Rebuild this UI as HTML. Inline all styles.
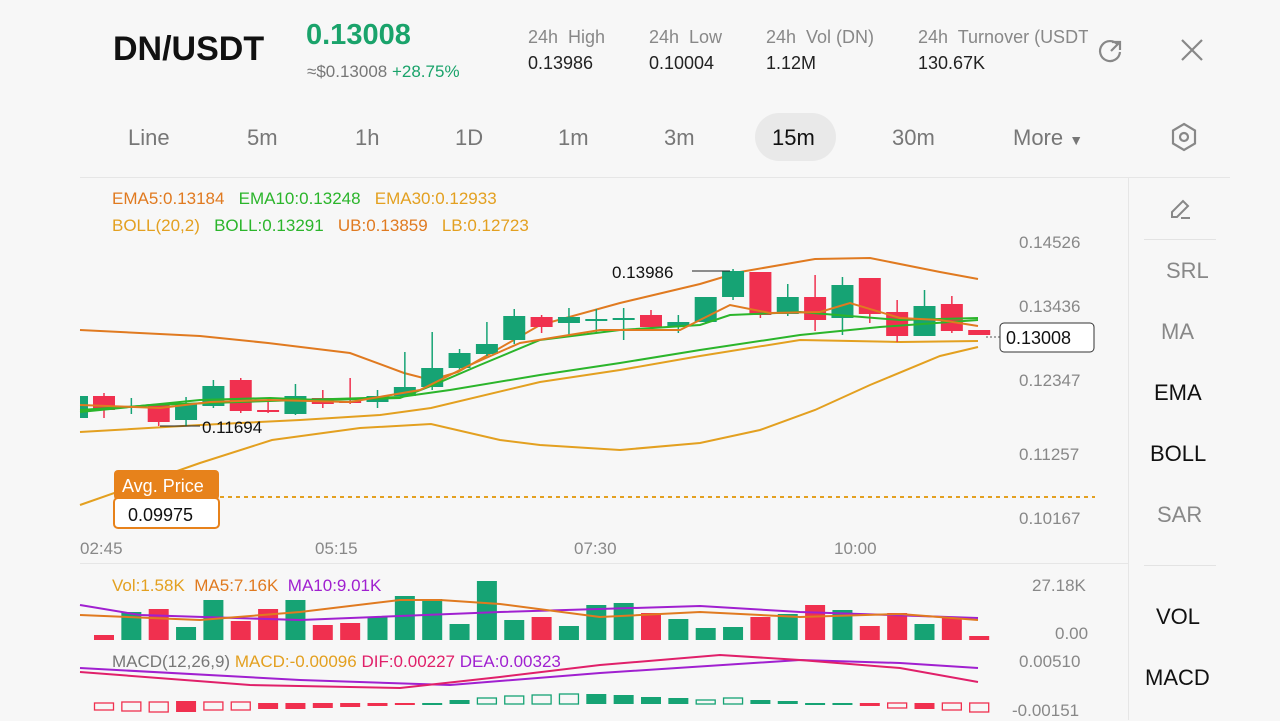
<!DOCTYPE html>
<html><head><meta charset="utf-8"><style>
body{margin:0;width:1280px;height:720px;overflow:hidden;background:#f7f7f7;font-family:"Liberation Sans",sans-serif}
.a{position:absolute;white-space:nowrap}
</style></head><body>
<div class="a" style="left:113px;top:30px;font-size:34px;font-weight:bold;color:#111">DN/USDT</div>
<div class="a" style="left:306px;top:19px;font-size:29px;font-weight:bold;color:#1aa36b">0.13008</div>
<div class="a" style="left:307px;top:62px;font-size:17px;color:#777">≈$0.13008 <span style="color:#1aa36b">+28.75%</span></div>
<div class="a" style="left:528px;top:27px;font-size:18px;color:#888">24h&nbsp; High</div>
<div class="a" style="left:528px;top:53px;font-size:18px;color:#222">0.13986</div>
<div class="a" style="left:649px;top:27px;font-size:18px;color:#888">24h&nbsp; Low</div>
<div class="a" style="left:649px;top:53px;font-size:18px;color:#222">0.10004</div>
<div class="a" style="left:766px;top:27px;font-size:18px;color:#888">24h&nbsp; Vol (DN)</div>
<div class="a" style="left:766px;top:53px;font-size:18px;color:#222">1.12M</div>
<div class="a" style="left:918px;top:27px;font-size:18px;color:#888;width:170px;overflow:hidden">24h&nbsp; Turnover (USDT)</div>
<div class="a" style="left:918px;top:53px;font-size:18px;color:#222">130.67K</div>
<svg class="a" style="left:1096px;top:36px" width="30" height="30" viewBox="0 0 30 30" fill="none" stroke="#888" stroke-width="2.2"><path d="M22 9 A10 10 0 1 0 24 16"/><path d="M16 6 H24 V14"/><path d="M24 6 L15 15"/></svg>
<svg class="a" style="left:1180px;top:38px" width="24" height="24" stroke="#888" stroke-width="2.2"><path d="M2 2L22 22M22 2L2 22"/></svg>
<div class="a" style="left:755px;top:113px;width:81px;height:48px;border-radius:24px;background:#e9e9e9"></div>
<div class="a" style="top:125px;font-size:22px;color:#777;left:0;width:1280px">
<span class="a" style="left:128px">Line</span><span class="a" style="left:247px">5m</span><span class="a" style="left:355px">1h</span><span class="a" style="left:455px">1D</span><span class="a" style="left:558px">1m</span><span class="a" style="left:664px">3m</span><span class="a" style="left:772px;color:#111">15m</span><span class="a" style="left:892px">30m</span><span class="a" style="left:1013px">More <span style="font-size:14px">▼</span></span></div>
<svg class="a" style="left:1170px;top:122px" width="28" height="30" fill="none" stroke="#888" stroke-width="2.2"><path d="M14 2 L25 8.5 V21.5 L14 28 L3 21.5 V8.5 Z"/><circle cx="14" cy="15" r="4"/></svg>
<div class="a" style="left:80px;top:177px;width:1150px;height:1px;background:#e6e6e6"></div>
<div class="a" style="left:1128px;top:178px;width:1px;height:542px;background:#e6e6e6"></div>
<div class="a" style="left:1144px;top:239px;width:72px;height:1px;background:#e3e3e3"></div>
<div class="a" style="left:1144px;top:565px;width:72px;height:1px;background:#e3e3e3"></div>
<div class="a" style="left:80px;top:563px;width:1048px;height:1px;background:#e6e6e6"></div>
<svg class="a" style="left:1168px;top:196px" width="26" height="26" fill="none" stroke="#888" stroke-width="2"><path d="M4 21 L4 16 L15 5 L20 10 L9 21 Z M13 22 H22"/></svg>
<div class="a" style="left:1166px;top:258px;font-size:22px;color:#888">SRL</div>
<div class="a" style="left:1161px;top:319px;font-size:22px;color:#888">MA</div>
<div class="a" style="left:1154px;top:380px;font-size:22px;color:#111">EMA</div>
<div class="a" style="left:1150px;top:441px;font-size:22px;color:#111">BOLL</div>
<div class="a" style="left:1157px;top:502px;font-size:22px;color:#888">SAR</div>
<div class="a" style="left:1156px;top:604px;font-size:22px;color:#111">VOL</div>
<div class="a" style="left:1145px;top:665px;font-size:22px;color:#111">MACD</div>
<div class="a" style="left:112px;top:189px;font-size:17px;color:#e07a20">EMA5:0.13184 &nbsp;&nbsp;<span style="color:#2bb52b">EMA10:0.13248</span> &nbsp;&nbsp;<span style="color:#e3a020">EMA30:0.12933</span></div>
<div class="a" style="left:112px;top:216px;font-size:17px;color:#e3a020">BOLL(20,2) &nbsp;&nbsp;<span style="color:#2bb52b">BOLL:0.13291</span> &nbsp;&nbsp;<span style="color:#e07a20">UB:0.13859</span> &nbsp;&nbsp;LB:0.12723</div>
<div class="a" style="left:1019px;top:233px;font-size:17px;color:#888;line-height:20px">0.14526</div>
<div class="a" style="left:1019px;top:297px;font-size:17px;color:#888">0.13436</div>
<div class="a" style="left:1019px;top:371px;font-size:17px;color:#888">0.12347</div>
<div class="a" style="left:1019px;top:445px;font-size:17px;color:#888">0.11257</div>
<div class="a" style="left:1019px;top:509px;font-size:17px;color:#888">0.10167</div>
<div class="a" style="left:80px;top:539px;font-size:17px;color:#888">02:45</div>
<div class="a" style="left:315px;top:539px;font-size:17px;color:#888">05:15</div>
<div class="a" style="left:574px;top:539px;font-size:17px;color:#888">07:30</div>
<div class="a" style="left:834px;top:539px;font-size:17px;color:#888">10:00</div>
<div class="a" style="left:1032px;top:576px;font-size:17px;color:#888">27.18K</div>
<div class="a" style="left:1055px;top:624px;font-size:17px;color:#888">0.00</div>
<div class="a" style="left:1019px;top:652px;font-size:17px;color:#888">0.00510</div>
<div class="a" style="left:1012px;top:701px;font-size:17px;color:#888">-0.00151</div>
<div class="a" style="left:112px;top:576px;font-size:17px;color:#e3a020">Vol:1.58K &nbsp;<span style="color:#e07a20">MA5:7.16K</span> &nbsp;<span style="color:#a020d0">MA10:9.01K</span></div>
<div class="a" style="left:112px;top:652px;font-size:17px;color:#777">MACD(12,26,9) <span style="color:#e3a020">MACD:-0.00096</span> <span style="color:#e0206a">DIF:0.00227</span> <span style="color:#a020d0">DEA:0.00323</span></div>
<svg class="a" style="left:0;top:0" width="1280" height="720">
<g fill="none" stroke-width="2">
<path stroke="#e07a20" d="M80 330 L200 336 L268 343 L350 353 L404 373 L431 380 L458 372 L540 325 L620 303 L700 284 L740 272 L815 259 L870 258 L940 272 L978 279"/>
<path stroke="#e3a020" d="M80 505 L200 463 L272 440 L360 428 L431 424 L500 440 L540 445 L620 450 L700 443 L760 430 L815 410 L870 385 L940 356 L978 347"/>
<path stroke="#e3a020" d="M80 432 L200 425 L300 420 L380 415 L431 408 L540 382 L620 370 L700 356 L800 340 L900 342 L978 341"/>
</g>
<g id="c"></g>
<g fill="none" stroke-width="2">
<path stroke="#2bb52b" d="M80 412 L150 405 L300 400 L400 397 L450 390 L540 375 L620 363 L700 350 L800 335 L880 327 L978 320"/>
<path stroke="#2bb52b" d="M80 410 L140 406 L200 400 L270 398 L320 400 L400 398 L431 386 L480 365 L540 340 L620 330 L700 325 L730 315 L800 312 L900 320 L978 318"/>
<path stroke="#e07a20" d="M80 405 L160 408 L210 402 L270 400 L350 402 L420 390 L470 365 L520 343 L600 330 L680 330 L730 305 L770 313 L820 312 L850 303 L900 318 L940 320 L978 326"/>
<path stroke="#222" stroke-width="1" d="M692 271 H730 M160 426 H200"/>
<path stroke="#e3a020" stroke-width="2" stroke-dasharray="4 4" d="M220 497 H1095"/>
<path stroke="#555" stroke-width="1" stroke-dasharray="2 2" d="M986 337 H1000"/>
<path stroke="#a020d0" d="M80 605 L140 615 L300 620 L500 612 L700 606 L800 612 L978 618"/>
<path stroke="#e07a20" d="M80 615 L200 620 L300 612 L400 600 L440 600 L500 604 L600 617 L700 612 L800 617 L900 614 L978 620"/>
<path stroke="#a020d0" d="M80 668 L300 680 L450 685 L600 673 L800 660 L900 663 L978 668"/>
<path stroke="#e0206a" d="M80 672 L250 685 L400 688 L500 677 L600 665 L720 655 L800 660 L900 668 L978 682"/>
</g>
<text x="612" y="278" font-size="17" fill="#111" font-family="Liberation Sans">0.13986</text>
<text x="202" y="433" font-size="17" fill="#111" font-family="Liberation Sans">0.11694</text>
<rect x="1000" y="323" width="94" height="29" rx="4" fill="#fff" stroke="#333"/>
<text x="1006" y="344" font-size="18" fill="#111" font-family="Liberation Sans">0.13008</text>
<rect x="114" y="470" width="105" height="30" rx="4" fill="#e7821b"/>
<rect x="114" y="498" width="105" height="30" rx="4" fill="#fff" stroke="#e7821b" stroke-width="2"/>
<text x="122" y="492" font-size="18" fill="#fff" font-family="Liberation Sans">Avg. Price</text>
<text x="128" y="521" font-size="18" fill="#111" font-family="Liberation Sans">0.09975</text>
</svg>
<script>
var G="#16a374",R="#f0304f";
var x0=104,dx=27.35;
var c=[[396,410,393,418,R],[406,406,398,414,G],[405,422,405,426,R],[403,420,397,426,G],[386,406,380,408,G],[380,411,378,413,R],[410,411,398,413,R],[396,414,384,415,G],[398,404,390,408,R],[401,402,378,404,R],[396,402,390,408,G],[387,396,352,396,G],[368,387,332,390,G],[353,368,349,371,G],[344,354,322,356,G],[316,340,309,344,G],[317,327,315,333,R],[317,323,308,335,G],[319,320,309,333,G],[318,319,308,340,G],[315,327,310,330,R],[322,326,315,333,G],[297,322,297,324,G],[271,297,269,300,G],[272,315,272,318,R],[297,314,284,316,G],[297,320,275,331,R],[285,318,277,335,G],[278,314,278,323,R],[312,336,300,342,R],[306,336,290,336,G],[304,331,296,333,R],[330,335,330,335,R]];
var v=[[635,R],[612,G],[609,R],[627,G],[600,G],[621,R],[609,R],[600,G],[625,R],[623,R],[617,G],[596,G],[599,G],[624,G],[581,G],[620,G],[617,R],[626,G],[605,G],[603,G],[613,R],[619,G],[628,G],[627,G],[617,R],[614,G],[605,R],[610,G],[626,R],[613,R],[624,G],[617,R],[636,R]];
var m=[[703,710,R,0],[702,711,R,0],[702,712,R,0],[701,712,R,1],[702,710,R,0],[702,710,R,0],[703,709,R,1],[703,709,R,1],[703,708,R,1],[703,707,R,1],[703,706,R,1],[703,704,R,1],[703,704,G,1],[700,704,G,1],[698,704,G,0],[696,704,G,0],[695,704,G,0],[694,704,G,0],[694,704,G,1],[695,704,G,1],[697,704,G,1],[698,704,G,1],[700,704,G,0],[698,704,G,0],[700,704,G,1],[701,704,G,1],[703,704,G,1],[703,704,G,1],[703,706,R,1],[703,708,R,0],[703,709,R,1],[703,710,R,0],[703,712,R,0]];
var s='<rect x="80" y="396" width="8" height="22" fill="'+G+'"/>';
c.forEach(function(k,i){var x=x0+i*dx;s+='<line x1="'+x+'" x2="'+x+'" y1="'+k[2]+'" y2="'+k[3]+'" stroke="'+k[4]+'" stroke-width="1.5"/><rect x="'+(x-11)+'" y="'+k[0]+'" width="22" height="'+Math.max(2,k[1]-k[0])+'" fill="'+k[4]+'"/>';});
v.forEach(function(k,i){var x=x0+i*dx;s+='<rect x="'+(x-10)+'" y="'+k[0]+'" width="20" height="'+(640-k[0])+'" fill="'+k[1]+'"/>';});
m.forEach(function(k,i){var x=x0+i*dx;var h=Math.max(2,k[1]-k[0]);s+=k[3]?'<rect x="'+(x-10)+'" y="'+k[0]+'" width="20" height="'+h+'" fill="'+k[2]+'"/>':'<rect x="'+(x-9.5)+'" y="'+k[0]+'" width="19" height="'+h+'" fill="none" stroke="'+k[2]+'" stroke-width="1.3"/>';});
document.getElementById("c").innerHTML=s;
</script>
</body></html>
